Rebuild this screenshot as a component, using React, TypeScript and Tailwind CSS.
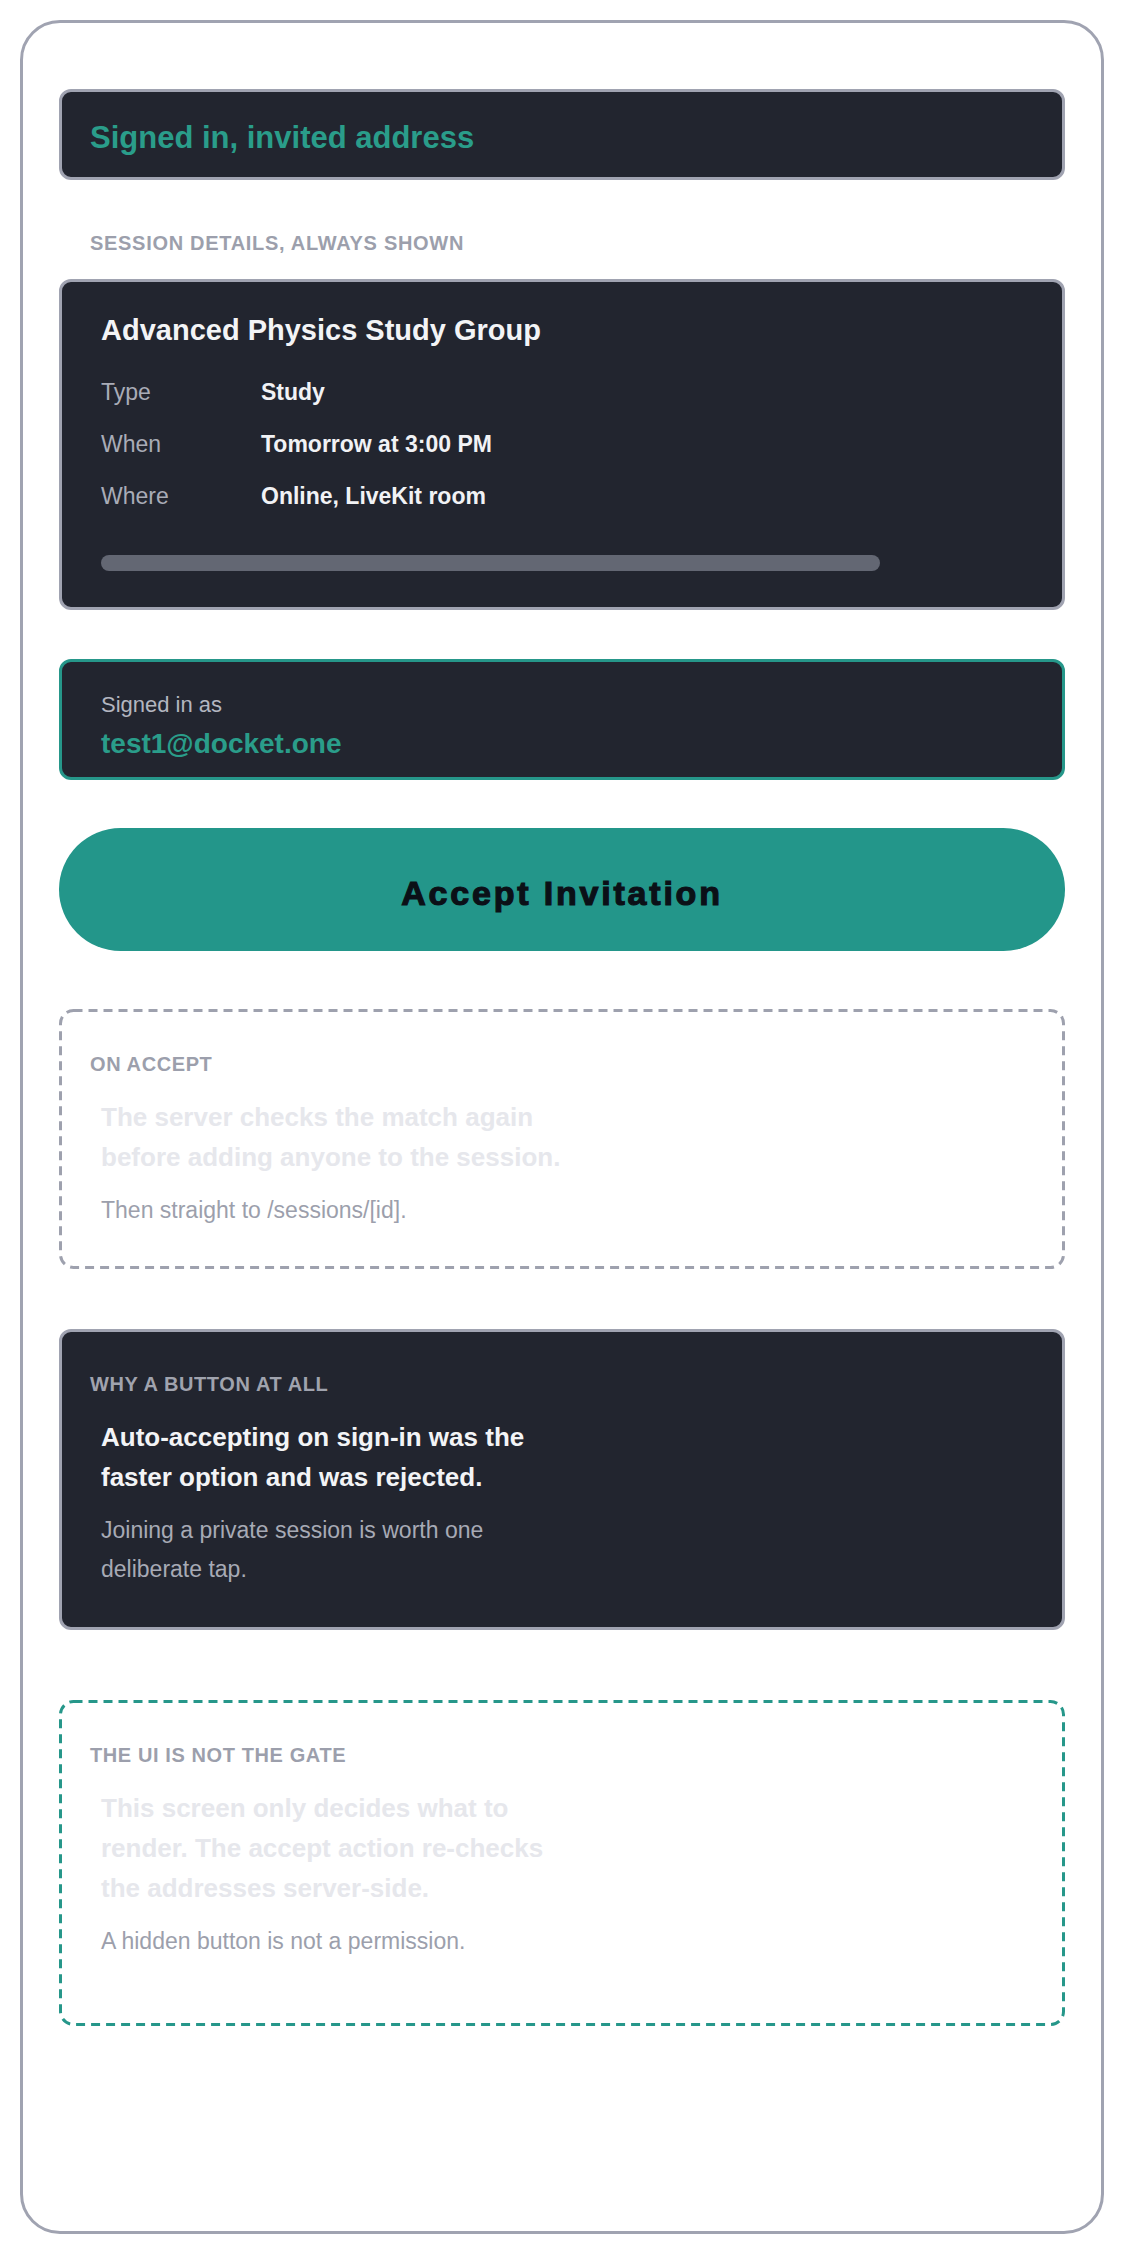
import React from "react";

const font = { fontFamily: '"Liberation Sans", Arial, sans-serif' };

function Row({ label, value }: { label: string; value: string }) {
  return (
    <div className="flex h-[52px] items-center text-[23px]">
      <div className="w-[160px] text-[#a9acb7]">{label}</div>
      <div className="font-bold text-[#f1f2f5]">{value}</div>
    </div>
  );
}

function DashedFrame({ color }: { color: string }) {
  return (
    <svg
      className="pointer-events-none absolute left-[-3px] top-[-3px] h-[calc(100%+6px)] w-[calc(100%+6px)]"
      aria-hidden="true"
    >
      <rect
        x="1.5"
        y="1.5"
        width="calc(100% - 3px)"
        height="calc(100% - 3px)"
        rx="13"
        ry="13"
        fill="none"
        stroke={color}
        strokeWidth="3"
        strokeDasharray="9 6"
      />
    </svg>
  );
}

export default function App() {
  return (
    <div className="bg-white p-[20px]" style={font}>
      <div className="box-border h-[2214px] rounded-[40px] border-[3px] border-[#a0a3b1] bg-white px-[36px] pt-[66px]">
        {/* Banner */}
        <div className="box-border flex h-[91px] items-center rounded-[12px] border-[3px] border-[#a0a3b1] bg-[#22252f] pl-[28px] pt-[6px]">
          <span className="text-[31px] font-bold leading-[36px] text-[#2a9d8a]">
            Signed in, invited address
          </span>
        </div>

        {/* Section label */}
        <div className="ml-[31px] mt-[51px] text-[20px] font-bold uppercase leading-[24px] tracking-[0.035em] text-[#9c9fac]">
          Session details, always shown
        </div>

        {/* Session card */}
        <div className="mt-[24px] rounded-[12px] border-[3px] border-[#a0a3b1] bg-[#22252f] pb-[36px] pl-[39px] pr-[39px] pt-[30px]">
          <div className="text-[29px] font-bold leading-[36px] text-[#f3f4f6]">
            Advanced Physics Study Group
          </div>
          <div className="mt-[18px]">
            <Row label="Type" value="Study" />
            <Row label="When" value="Tomorrow at 3:00 PM" />
            <Row label="Where" value="Online, LiveKit room" />
          </div>
          <div className="mt-[33px] h-[16px] w-[779px] rounded-full bg-[#636773]" />
        </div>

        {/* Signed in as */}
        <div className="box-border mt-[49px] h-[121px] rounded-[12px] border-[3px] border-[#26978a] bg-[#22252f] pl-[39px] pt-[29px]">
          <div className="text-[22px] leading-[28px] text-[#b3b6c0]">Signed in as</div>
          <div className="mt-[8px] text-[28px] font-bold leading-[34px] text-[#2a9d8a]">
            test1@docket.one
          </div>
        </div>

        {/* Accept button */}
        <button
          type="button"
          className="mt-[48px] flex h-[123px] w-full items-center justify-center rounded-full bg-[#23968a] pt-[8px] text-[34px] font-black tracking-[2.8px] text-[#0b1017] [-webkit-text-stroke:1.2px_#0b1017]"
          style={font}
        >
          Accept Invitation
        </button>

        {/* On accept */}
        <div className="relative mt-[58px] rounded-[14px] border-[3px] border-transparent pb-[36px] pl-[28px] pt-[40px]">
          <DashedFrame color="#9ea1ae" />
          <div className="text-[20px] font-bold uppercase leading-[24px] tracking-[0.03em] text-[#9c9fac]">
            On accept
          </div>
          <div className="ml-[11px] mt-[21px] max-w-[470px] text-[26px] font-bold leading-[40px] text-[#e6e7ec]">
            The server checks the match again before adding anyone to the session.
          </div>
          <div className="ml-[11px] mt-[14px] max-w-[470px] text-[23px] leading-[39px] text-[#9c9fac]">
            Then straight to /sessions/[id].
          </div>
        </div>

        {/* Why a button */}
        <div className="mt-[60px] rounded-[12px] border-[3px] border-[#a0a3b1] bg-[#22252f] pb-[38px] pl-[28px] pt-[40px]">
          <div className="text-[20px] font-bold uppercase leading-[24px] tracking-[0.03em] text-[#a0a3ae]">
            Why a button at all
          </div>
          <div className="ml-[11px] mt-[21px] max-w-[470px] text-[26px] font-bold leading-[40px] text-[#f3f4f6]">
            Auto-accepting on sign-in was the faster option and was rejected.
          </div>
          <div className="ml-[11px] mt-[14px] max-w-[470px] text-[23px] leading-[39px] text-[#a7aab5]">
            Joining a private session is worth one deliberate tap.
          </div>
        </div>

        {/* The UI is not the gate */}
        <div className="relative mt-[70px] rounded-[14px] border-[3px] border-transparent pb-[62px] pl-[28px] pt-[40px]">
          <DashedFrame color="#26978a" />
          <div className="text-[20px] font-bold uppercase leading-[24px] tracking-[0.03em] text-[#9c9fac]">
            The UI is not the gate
          </div>
          <div className="ml-[11px] mt-[21px] max-w-[470px] text-[26px] font-bold leading-[40px] text-[#e6e7ec]">
            This screen only decides what to render. The accept action re-checks the addresses server-side.
          </div>
          <div className="ml-[11px] mt-[14px] max-w-[470px] text-[23px] leading-[39px] text-[#9c9fac]">
            A hidden button is not a permission.
          </div>
        </div>
      </div>
    </div>
  );
}
